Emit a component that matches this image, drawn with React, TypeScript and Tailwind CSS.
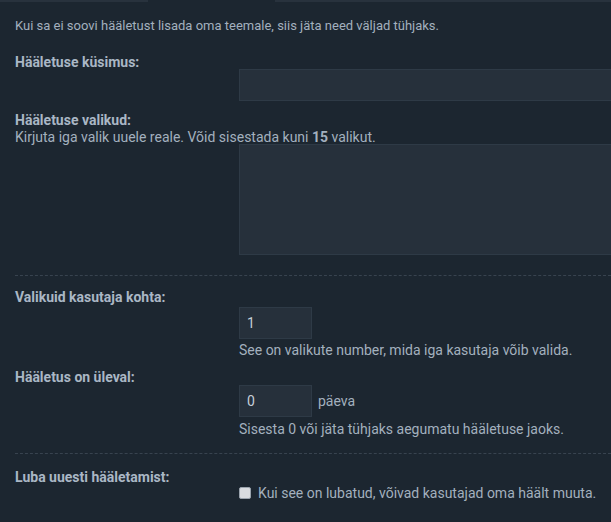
import React from "react";

const font = { fontFamily: "Roboto, 'Noto Sans', sans-serif" };

function Row({
  label,
  explain,
  children,
  offset,
}: {
  label: string;
  explain?: React.ReactNode;
  children: React.ReactNode;
  offset: string;
}) {
  return (
    <div className="flex">
      <div className="w-[224px] shrink-0">
        <div className="font-bold text-[#aab7c5] leading-[18px]">{label}</div>
        {explain && <div className="leading-[16px] whitespace-nowrap">{explain}</div>}
      </div>
      <div className={"flex-1 min-w-0 " + offset}>{children}</div>
    </div>
  );
}

export default function App() {
  return (
    <div
      className="w-[611px] h-[522px] overflow-hidden bg-[#1c2630] text-[14px] text-[#a3b0be]"
      style={font}
    >
      <div className="flex h-[2px]">
        <div className="w-[148px] bg-[#28323d]" />
        <div className="w-[127px]" />
        <div className="flex-1 bg-[#28323d]" />
      </div>
      <div className="pl-[15px]">
        <p className="pt-[15px] leading-[18px] text-[13px]">
          Kui sa ei soovi hääletust lisada oma teemale, siis jäta need väljad tühjaks.
        </p>

        <div className="mt-[18px]">
          <Row label="Hääletuse küsimus:" offset="pt-[16px]">
            <div className="h-[32px] w-[400px] bg-[#26303b] border border-[#2e3a46]" />
          </Row>
        </div>

        <div className="mt-[10px]">
          <Row
            label="Hääletuse valikud:"
            explain={
              <>
                Kirjuta iga valik uuele reale. Võid sisestada kuni <b>15</b> valikut.
              </>
            }
            offset="pt-[33px]"
          >
            <div className="h-[111px] w-[400px] bg-[#26303b] border border-[#2e3a46]" />
          </Row>
        </div>

        <div className="mt-[20px] border-t border-dashed border-[#38434f]" />

        <div className="mt-[12px]">
          <Row label="Valikuid kasutaja kohta:" offset="pt-[19px]">
            <div className="h-[32px] w-[73px] bg-[#26303b] border border-[#2e3a46] flex items-center pl-[7px] text-[#c5ced8] text-[14px]">
              1
            </div>
            <div className="leading-[18px] mt-[2px]">
              See on valikute number, mida iga kasutaja võib valida.
            </div>
          </Row>
        </div>

        <div className="mt-[9px]">
          <Row label="Hääletus on üleval:" offset="pt-[17px]">
            <div className="flex items-center gap-[6px]">
              <div className="h-[32px] w-[73px] bg-[#26303b] border border-[#2e3a46] flex items-center pl-[7px] text-[#c5ced8] text-[14px]">
                0
              </div>
              <span>päeva</span>
            </div>
            <div className="leading-[18px] mt-[3px]">
              Sisesta 0 või jäta tühjaks aegumatu hääletuse jaoks.
            </div>
          </Row>
        </div>

        <div className="mt-[15px] border-t border-dashed border-[#38434f]" />

        <div className="mt-[14px]">
          <Row label="Luba uuesti hääletamist:" offset="pt-[16px]">
            <label className="flex items-center gap-[7px] leading-[18px]">
              <span className="w-[12px] h-[12px] rounded-[2px] bg-[#d9dce0] border border-[#9aa3ad] shrink-0" />
              <span>Kui see on lubatud, võivad kasutajad oma häält muuta.</span>
            </label>
          </Row>
        </div>
      </div>
    </div>
  );
}
